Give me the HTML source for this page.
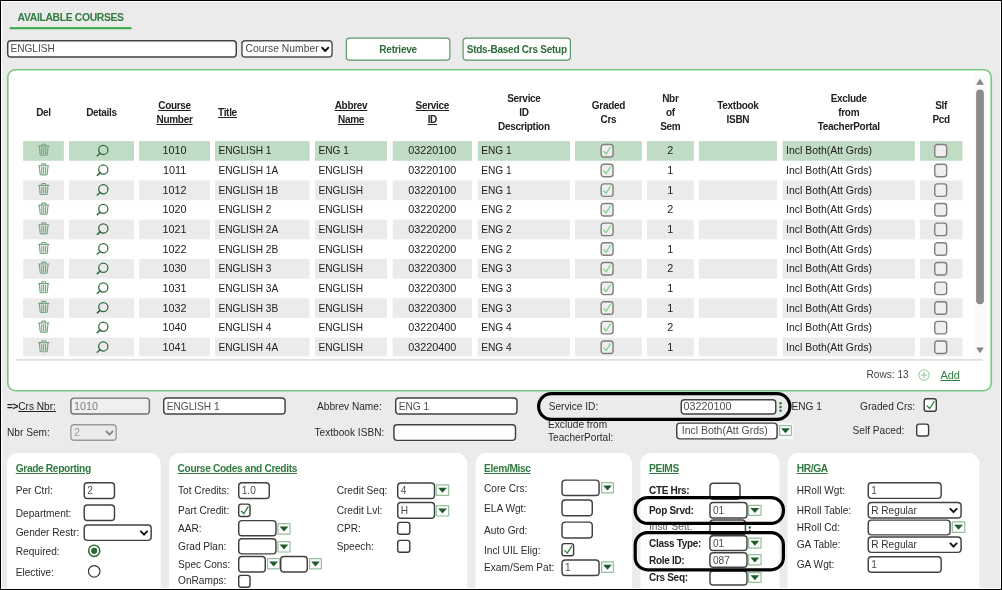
<!DOCTYPE html><html><head><meta charset="utf-8"><title>Available Courses</title><style>
*{box-sizing:border-box;margin:0;padding:0}
html,body{width:1002px;height:590px;overflow:hidden}
body{background:#ebebeb;font-family:"Liberation Sans",sans-serif;font-size:10.15px;color:#2b2b2b;position:relative}
.a{position:absolute}
.t{position:absolute;white-space:nowrap;line-height:14px;height:14px}
.b{font-weight:bold;font-size:10px;letter-spacing:-0.3px;color:#222}
.g{color:#2f7a3e}
.u{text-decoration:underline}
.c{text-align:center}
.i{color:#4d4d4d}
.r{color:#202020}
.n{color:#202020;font-size:10.8px}
.h{font-weight:bold;font-size:10.2px;letter-spacing:-0.35px;color:#2f7a3e;text-decoration:underline}
.btn{font-weight:bold;font-size:10px;letter-spacing:-0.25px;color:#2c6b38;text-align:center}
.ly{position:absolute;left:0;top:0;width:1002px;height:590px}
div.ly{will-change:transform}
</style></head><body>
<svg class="ly" width="1002" height="590" viewBox="0 0 1002 590"><rect x="9.6" y="27.2" width="121.9" height="2" fill="#35a845"/>
<rect x="7.72" y="40.83" width="228.55" height="16.25" rx="3.27" fill="#fff" stroke="#404040" stroke-width="1.45"/>
<rect x="241.92" y="40.83" width="90.15" height="16.25" rx="3.27" fill="#fff" stroke="#4f4f4f" stroke-width="1.45"/>
<path d="M322.1 47.7 L325.2 51 L328.3 47.7" fill="none" stroke="#111" stroke-width="1.9" stroke-linecap="round" stroke-linejoin="round"/>
<rect x="346.3" y="38.1" width="103.6" height="22" rx="3.4" fill="#fff" stroke="#5a9766" stroke-width="1.2"/>
<rect x="463.1" y="38.1" width="107.3" height="22" rx="3.4" fill="#fff" stroke="#5a9766" stroke-width="1.2"/>
<rect x="7.75" y="69.75" width="983.5" height="321" rx="7.65" fill="#fff" stroke="#7ac982" stroke-width="1.7"/>
<rect x="23.1" y="141.1" width="40.8" height="19.65" fill="#c0dcc4"/>
<rect x="69" y="141.1" width="65" height="19.65" fill="#c0dcc4"/>
<rect x="139.1" y="141.1" width="70.9" height="19.65" fill="#c0dcc4"/>
<rect x="215" y="141.1" width="94.6" height="19.65" fill="#c0dcc4"/>
<rect x="315" y="141.1" width="72" height="19.65" fill="#c0dcc4"/>
<rect x="392.7" y="141.1" width="79.3" height="19.65" fill="#c0dcc4"/>
<rect x="477.8" y="141.1" width="92.2" height="19.65" fill="#c0dcc4"/>
<rect x="575" y="141.1" width="66.9" height="19.65" fill="#c0dcc4"/>
<rect x="646.9" y="141.1" width="46.9" height="19.65" fill="#c0dcc4"/>
<rect x="698.9" y="141.1" width="78.1" height="19.65" fill="#c0dcc4"/>
<rect x="782.6" y="141.1" width="132.3" height="19.65" fill="#c0dcc4"/>
<rect x="919.9" y="141.1" width="42.6" height="19.65" fill="#c0dcc4"/>
<g transform="translate(38.2 143.62)"><path d="M0.4 2.5 H10.6 M3.5 2.3 V1.2 Q3.5 0.6 4.1 0.6 H6.9 Q7.5 0.6 7.5 1.2 V2.3 M1.2 2.7 L1.9 10.7 Q2 11.6 2.9 11.6 H8.1 Q9 11.6 9.1 10.7 L9.8 2.7 M3.6 4.1 V10.1 M5.5 4.1 V10.1 M7.4 4.1 V10.1" fill="none" stroke="#76a583" stroke-width="1.15" stroke-linecap="round"/></g>
<g transform="translate(95.2 144.02)"><circle cx="8.1" cy="5.9" r="4.6" fill="none" stroke="#2f6b3c" stroke-width="1.25"/><path d="M4.9 9.2 L2.1 11.7" stroke="#2f6b3c" stroke-width="1.5" stroke-linecap="round"/></g>
<g transform="translate(600.4 143.82)"><rect x="0.75" y="0.75" width="11.9" height="12.5" rx="2.6" fill="#efefef" stroke="#7f7f7f" stroke-width="1.4"/><path d="M3.4 7.6 L5.7 10.2 L10 3.4" fill="none" stroke="#86d392" stroke-width="1.35" stroke-linecap="round" stroke-linejoin="round"/></g>
<g transform="translate(934 143.82)"><rect x="0.75" y="0.75" width="11.9" height="12.5" rx="2.6" fill="#efefef" stroke="#7f7f7f" stroke-width="1.4"/></g>
<g transform="translate(38.2 163.27)"><path d="M0.4 2.5 H10.6 M3.5 2.3 V1.2 Q3.5 0.6 4.1 0.6 H6.9 Q7.5 0.6 7.5 1.2 V2.3 M1.2 2.7 L1.9 10.7 Q2 11.6 2.9 11.6 H8.1 Q9 11.6 9.1 10.7 L9.8 2.7 M3.6 4.1 V10.1 M5.5 4.1 V10.1 M7.4 4.1 V10.1" fill="none" stroke="#76a583" stroke-width="1.15" stroke-linecap="round"/></g>
<g transform="translate(95.2 163.67)"><circle cx="8.1" cy="5.9" r="4.6" fill="none" stroke="#2f6b3c" stroke-width="1.25"/><path d="M4.9 9.2 L2.1 11.7" stroke="#2f6b3c" stroke-width="1.5" stroke-linecap="round"/></g>
<g transform="translate(600.4 163.47)"><rect x="0.75" y="0.75" width="11.9" height="12.5" rx="2.6" fill="#efefef" stroke="#7f7f7f" stroke-width="1.4"/><path d="M3.4 7.6 L5.7 10.2 L10 3.4" fill="none" stroke="#86d392" stroke-width="1.35" stroke-linecap="round" stroke-linejoin="round"/></g>
<g transform="translate(934 163.47)"><rect x="0.75" y="0.75" width="11.9" height="12.5" rx="2.6" fill="#efefef" stroke="#7f7f7f" stroke-width="1.4"/></g>
<rect x="23.1" y="180.4" width="40.8" height="19.65" fill="#ebebeb"/>
<rect x="69" y="180.4" width="65" height="19.65" fill="#ebebeb"/>
<rect x="139.1" y="180.4" width="70.9" height="19.65" fill="#ebebeb"/>
<rect x="215" y="180.4" width="94.6" height="19.65" fill="#ebebeb"/>
<rect x="315" y="180.4" width="72" height="19.65" fill="#ebebeb"/>
<rect x="392.7" y="180.4" width="79.3" height="19.65" fill="#ebebeb"/>
<rect x="477.8" y="180.4" width="92.2" height="19.65" fill="#ebebeb"/>
<rect x="575" y="180.4" width="66.9" height="19.65" fill="#ebebeb"/>
<rect x="646.9" y="180.4" width="46.9" height="19.65" fill="#ebebeb"/>
<rect x="698.9" y="180.4" width="78.1" height="19.65" fill="#ebebeb"/>
<rect x="782.6" y="180.4" width="132.3" height="19.65" fill="#ebebeb"/>
<rect x="919.9" y="180.4" width="42.6" height="19.65" fill="#ebebeb"/>
<g transform="translate(38.2 182.92)"><path d="M0.4 2.5 H10.6 M3.5 2.3 V1.2 Q3.5 0.6 4.1 0.6 H6.9 Q7.5 0.6 7.5 1.2 V2.3 M1.2 2.7 L1.9 10.7 Q2 11.6 2.9 11.6 H8.1 Q9 11.6 9.1 10.7 L9.8 2.7 M3.6 4.1 V10.1 M5.5 4.1 V10.1 M7.4 4.1 V10.1" fill="none" stroke="#76a583" stroke-width="1.15" stroke-linecap="round"/></g>
<g transform="translate(95.2 183.32)"><circle cx="8.1" cy="5.9" r="4.6" fill="none" stroke="#2f6b3c" stroke-width="1.25"/><path d="M4.9 9.2 L2.1 11.7" stroke="#2f6b3c" stroke-width="1.5" stroke-linecap="round"/></g>
<g transform="translate(600.4 183.12)"><rect x="0.75" y="0.75" width="11.9" height="12.5" rx="2.6" fill="#efefef" stroke="#7f7f7f" stroke-width="1.4"/><path d="M3.4 7.6 L5.7 10.2 L10 3.4" fill="none" stroke="#86d392" stroke-width="1.35" stroke-linecap="round" stroke-linejoin="round"/></g>
<g transform="translate(934 183.12)"><rect x="0.75" y="0.75" width="11.9" height="12.5" rx="2.6" fill="#efefef" stroke="#7f7f7f" stroke-width="1.4"/></g>
<g transform="translate(38.2 202.57)"><path d="M0.4 2.5 H10.6 M3.5 2.3 V1.2 Q3.5 0.6 4.1 0.6 H6.9 Q7.5 0.6 7.5 1.2 V2.3 M1.2 2.7 L1.9 10.7 Q2 11.6 2.9 11.6 H8.1 Q9 11.6 9.1 10.7 L9.8 2.7 M3.6 4.1 V10.1 M5.5 4.1 V10.1 M7.4 4.1 V10.1" fill="none" stroke="#76a583" stroke-width="1.15" stroke-linecap="round"/></g>
<g transform="translate(95.2 202.97)"><circle cx="8.1" cy="5.9" r="4.6" fill="none" stroke="#2f6b3c" stroke-width="1.25"/><path d="M4.9 9.2 L2.1 11.7" stroke="#2f6b3c" stroke-width="1.5" stroke-linecap="round"/></g>
<g transform="translate(600.4 202.77)"><rect x="0.75" y="0.75" width="11.9" height="12.5" rx="2.6" fill="#efefef" stroke="#7f7f7f" stroke-width="1.4"/><path d="M3.4 7.6 L5.7 10.2 L10 3.4" fill="none" stroke="#86d392" stroke-width="1.35" stroke-linecap="round" stroke-linejoin="round"/></g>
<g transform="translate(934 202.77)"><rect x="0.75" y="0.75" width="11.9" height="12.5" rx="2.6" fill="#efefef" stroke="#7f7f7f" stroke-width="1.4"/></g>
<rect x="23.1" y="219.7" width="40.8" height="19.65" fill="#ebebeb"/>
<rect x="69" y="219.7" width="65" height="19.65" fill="#ebebeb"/>
<rect x="139.1" y="219.7" width="70.9" height="19.65" fill="#ebebeb"/>
<rect x="215" y="219.7" width="94.6" height="19.65" fill="#ebebeb"/>
<rect x="315" y="219.7" width="72" height="19.65" fill="#ebebeb"/>
<rect x="392.7" y="219.7" width="79.3" height="19.65" fill="#ebebeb"/>
<rect x="477.8" y="219.7" width="92.2" height="19.65" fill="#ebebeb"/>
<rect x="575" y="219.7" width="66.9" height="19.65" fill="#ebebeb"/>
<rect x="646.9" y="219.7" width="46.9" height="19.65" fill="#ebebeb"/>
<rect x="698.9" y="219.7" width="78.1" height="19.65" fill="#ebebeb"/>
<rect x="782.6" y="219.7" width="132.3" height="19.65" fill="#ebebeb"/>
<rect x="919.9" y="219.7" width="42.6" height="19.65" fill="#ebebeb"/>
<g transform="translate(38.2 222.22)"><path d="M0.4 2.5 H10.6 M3.5 2.3 V1.2 Q3.5 0.6 4.1 0.6 H6.9 Q7.5 0.6 7.5 1.2 V2.3 M1.2 2.7 L1.9 10.7 Q2 11.6 2.9 11.6 H8.1 Q9 11.6 9.1 10.7 L9.8 2.7 M3.6 4.1 V10.1 M5.5 4.1 V10.1 M7.4 4.1 V10.1" fill="none" stroke="#76a583" stroke-width="1.15" stroke-linecap="round"/></g>
<g transform="translate(95.2 222.62)"><circle cx="8.1" cy="5.9" r="4.6" fill="none" stroke="#2f6b3c" stroke-width="1.25"/><path d="M4.9 9.2 L2.1 11.7" stroke="#2f6b3c" stroke-width="1.5" stroke-linecap="round"/></g>
<g transform="translate(600.4 222.42)"><rect x="0.75" y="0.75" width="11.9" height="12.5" rx="2.6" fill="#efefef" stroke="#7f7f7f" stroke-width="1.4"/><path d="M3.4 7.6 L5.7 10.2 L10 3.4" fill="none" stroke="#86d392" stroke-width="1.35" stroke-linecap="round" stroke-linejoin="round"/></g>
<g transform="translate(934 222.42)"><rect x="0.75" y="0.75" width="11.9" height="12.5" rx="2.6" fill="#efefef" stroke="#7f7f7f" stroke-width="1.4"/></g>
<g transform="translate(38.2 241.87)"><path d="M0.4 2.5 H10.6 M3.5 2.3 V1.2 Q3.5 0.6 4.1 0.6 H6.9 Q7.5 0.6 7.5 1.2 V2.3 M1.2 2.7 L1.9 10.7 Q2 11.6 2.9 11.6 H8.1 Q9 11.6 9.1 10.7 L9.8 2.7 M3.6 4.1 V10.1 M5.5 4.1 V10.1 M7.4 4.1 V10.1" fill="none" stroke="#76a583" stroke-width="1.15" stroke-linecap="round"/></g>
<g transform="translate(95.2 242.27)"><circle cx="8.1" cy="5.9" r="4.6" fill="none" stroke="#2f6b3c" stroke-width="1.25"/><path d="M4.9 9.2 L2.1 11.7" stroke="#2f6b3c" stroke-width="1.5" stroke-linecap="round"/></g>
<g transform="translate(600.4 242.07)"><rect x="0.75" y="0.75" width="11.9" height="12.5" rx="2.6" fill="#efefef" stroke="#7f7f7f" stroke-width="1.4"/><path d="M3.4 7.6 L5.7 10.2 L10 3.4" fill="none" stroke="#86d392" stroke-width="1.35" stroke-linecap="round" stroke-linejoin="round"/></g>
<g transform="translate(934 242.07)"><rect x="0.75" y="0.75" width="11.9" height="12.5" rx="2.6" fill="#efefef" stroke="#7f7f7f" stroke-width="1.4"/></g>
<rect x="23.1" y="259" width="40.8" height="19.65" fill="#ebebeb"/>
<rect x="69" y="259" width="65" height="19.65" fill="#ebebeb"/>
<rect x="139.1" y="259" width="70.9" height="19.65" fill="#ebebeb"/>
<rect x="215" y="259" width="94.6" height="19.65" fill="#ebebeb"/>
<rect x="315" y="259" width="72" height="19.65" fill="#ebebeb"/>
<rect x="392.7" y="259" width="79.3" height="19.65" fill="#ebebeb"/>
<rect x="477.8" y="259" width="92.2" height="19.65" fill="#ebebeb"/>
<rect x="575" y="259" width="66.9" height="19.65" fill="#ebebeb"/>
<rect x="646.9" y="259" width="46.9" height="19.65" fill="#ebebeb"/>
<rect x="698.9" y="259" width="78.1" height="19.65" fill="#ebebeb"/>
<rect x="782.6" y="259" width="132.3" height="19.65" fill="#ebebeb"/>
<rect x="919.9" y="259" width="42.6" height="19.65" fill="#ebebeb"/>
<g transform="translate(38.2 261.52)"><path d="M0.4 2.5 H10.6 M3.5 2.3 V1.2 Q3.5 0.6 4.1 0.6 H6.9 Q7.5 0.6 7.5 1.2 V2.3 M1.2 2.7 L1.9 10.7 Q2 11.6 2.9 11.6 H8.1 Q9 11.6 9.1 10.7 L9.8 2.7 M3.6 4.1 V10.1 M5.5 4.1 V10.1 M7.4 4.1 V10.1" fill="none" stroke="#76a583" stroke-width="1.15" stroke-linecap="round"/></g>
<g transform="translate(95.2 261.93)"><circle cx="8.1" cy="5.9" r="4.6" fill="none" stroke="#2f6b3c" stroke-width="1.25"/><path d="M4.9 9.2 L2.1 11.7" stroke="#2f6b3c" stroke-width="1.5" stroke-linecap="round"/></g>
<g transform="translate(600.4 261.72)"><rect x="0.75" y="0.75" width="11.9" height="12.5" rx="2.6" fill="#efefef" stroke="#7f7f7f" stroke-width="1.4"/><path d="M3.4 7.6 L5.7 10.2 L10 3.4" fill="none" stroke="#86d392" stroke-width="1.35" stroke-linecap="round" stroke-linejoin="round"/></g>
<g transform="translate(934 261.72)"><rect x="0.75" y="0.75" width="11.9" height="12.5" rx="2.6" fill="#efefef" stroke="#7f7f7f" stroke-width="1.4"/></g>
<g transform="translate(38.2 281.17)"><path d="M0.4 2.5 H10.6 M3.5 2.3 V1.2 Q3.5 0.6 4.1 0.6 H6.9 Q7.5 0.6 7.5 1.2 V2.3 M1.2 2.7 L1.9 10.7 Q2 11.6 2.9 11.6 H8.1 Q9 11.6 9.1 10.7 L9.8 2.7 M3.6 4.1 V10.1 M5.5 4.1 V10.1 M7.4 4.1 V10.1" fill="none" stroke="#76a583" stroke-width="1.15" stroke-linecap="round"/></g>
<g transform="translate(95.2 281.57)"><circle cx="8.1" cy="5.9" r="4.6" fill="none" stroke="#2f6b3c" stroke-width="1.25"/><path d="M4.9 9.2 L2.1 11.7" stroke="#2f6b3c" stroke-width="1.5" stroke-linecap="round"/></g>
<g transform="translate(600.4 281.37)"><rect x="0.75" y="0.75" width="11.9" height="12.5" rx="2.6" fill="#efefef" stroke="#7f7f7f" stroke-width="1.4"/><path d="M3.4 7.6 L5.7 10.2 L10 3.4" fill="none" stroke="#86d392" stroke-width="1.35" stroke-linecap="round" stroke-linejoin="round"/></g>
<g transform="translate(934 281.37)"><rect x="0.75" y="0.75" width="11.9" height="12.5" rx="2.6" fill="#efefef" stroke="#7f7f7f" stroke-width="1.4"/></g>
<rect x="23.1" y="298.3" width="40.8" height="19.65" fill="#ebebeb"/>
<rect x="69" y="298.3" width="65" height="19.65" fill="#ebebeb"/>
<rect x="139.1" y="298.3" width="70.9" height="19.65" fill="#ebebeb"/>
<rect x="215" y="298.3" width="94.6" height="19.65" fill="#ebebeb"/>
<rect x="315" y="298.3" width="72" height="19.65" fill="#ebebeb"/>
<rect x="392.7" y="298.3" width="79.3" height="19.65" fill="#ebebeb"/>
<rect x="477.8" y="298.3" width="92.2" height="19.65" fill="#ebebeb"/>
<rect x="575" y="298.3" width="66.9" height="19.65" fill="#ebebeb"/>
<rect x="646.9" y="298.3" width="46.9" height="19.65" fill="#ebebeb"/>
<rect x="698.9" y="298.3" width="78.1" height="19.65" fill="#ebebeb"/>
<rect x="782.6" y="298.3" width="132.3" height="19.65" fill="#ebebeb"/>
<rect x="919.9" y="298.3" width="42.6" height="19.65" fill="#ebebeb"/>
<g transform="translate(38.2 300.82)"><path d="M0.4 2.5 H10.6 M3.5 2.3 V1.2 Q3.5 0.6 4.1 0.6 H6.9 Q7.5 0.6 7.5 1.2 V2.3 M1.2 2.7 L1.9 10.7 Q2 11.6 2.9 11.6 H8.1 Q9 11.6 9.1 10.7 L9.8 2.7 M3.6 4.1 V10.1 M5.5 4.1 V10.1 M7.4 4.1 V10.1" fill="none" stroke="#76a583" stroke-width="1.15" stroke-linecap="round"/></g>
<g transform="translate(95.2 301.22)"><circle cx="8.1" cy="5.9" r="4.6" fill="none" stroke="#2f6b3c" stroke-width="1.25"/><path d="M4.9 9.2 L2.1 11.7" stroke="#2f6b3c" stroke-width="1.5" stroke-linecap="round"/></g>
<g transform="translate(600.4 301.02)"><rect x="0.75" y="0.75" width="11.9" height="12.5" rx="2.6" fill="#efefef" stroke="#7f7f7f" stroke-width="1.4"/><path d="M3.4 7.6 L5.7 10.2 L10 3.4" fill="none" stroke="#86d392" stroke-width="1.35" stroke-linecap="round" stroke-linejoin="round"/></g>
<g transform="translate(934 301.02)"><rect x="0.75" y="0.75" width="11.9" height="12.5" rx="2.6" fill="#efefef" stroke="#7f7f7f" stroke-width="1.4"/></g>
<g transform="translate(38.2 320.47)"><path d="M0.4 2.5 H10.6 M3.5 2.3 V1.2 Q3.5 0.6 4.1 0.6 H6.9 Q7.5 0.6 7.5 1.2 V2.3 M1.2 2.7 L1.9 10.7 Q2 11.6 2.9 11.6 H8.1 Q9 11.6 9.1 10.7 L9.8 2.7 M3.6 4.1 V10.1 M5.5 4.1 V10.1 M7.4 4.1 V10.1" fill="none" stroke="#76a583" stroke-width="1.15" stroke-linecap="round"/></g>
<g transform="translate(95.2 320.88)"><circle cx="8.1" cy="5.9" r="4.6" fill="none" stroke="#2f6b3c" stroke-width="1.25"/><path d="M4.9 9.2 L2.1 11.7" stroke="#2f6b3c" stroke-width="1.5" stroke-linecap="round"/></g>
<g transform="translate(600.4 320.67)"><rect x="0.75" y="0.75" width="11.9" height="12.5" rx="2.6" fill="#efefef" stroke="#7f7f7f" stroke-width="1.4"/><path d="M3.4 7.6 L5.7 10.2 L10 3.4" fill="none" stroke="#86d392" stroke-width="1.35" stroke-linecap="round" stroke-linejoin="round"/></g>
<g transform="translate(934 320.67)"><rect x="0.75" y="0.75" width="11.9" height="12.5" rx="2.6" fill="#efefef" stroke="#7f7f7f" stroke-width="1.4"/></g>
<rect x="23.1" y="337.6" width="40.8" height="18.5" fill="#ebebeb"/>
<rect x="69" y="337.6" width="65" height="18.5" fill="#ebebeb"/>
<rect x="139.1" y="337.6" width="70.9" height="18.5" fill="#ebebeb"/>
<rect x="215" y="337.6" width="94.6" height="18.5" fill="#ebebeb"/>
<rect x="315" y="337.6" width="72" height="18.5" fill="#ebebeb"/>
<rect x="392.7" y="337.6" width="79.3" height="18.5" fill="#ebebeb"/>
<rect x="477.8" y="337.6" width="92.2" height="18.5" fill="#ebebeb"/>
<rect x="575" y="337.6" width="66.9" height="18.5" fill="#ebebeb"/>
<rect x="646.9" y="337.6" width="46.9" height="18.5" fill="#ebebeb"/>
<rect x="698.9" y="337.6" width="78.1" height="18.5" fill="#ebebeb"/>
<rect x="782.6" y="337.6" width="132.3" height="18.5" fill="#ebebeb"/>
<rect x="919.9" y="337.6" width="42.6" height="18.5" fill="#ebebeb"/>
<g transform="translate(38.2 340.12)"><path d="M0.4 2.5 H10.6 M3.5 2.3 V1.2 Q3.5 0.6 4.1 0.6 H6.9 Q7.5 0.6 7.5 1.2 V2.3 M1.2 2.7 L1.9 10.7 Q2 11.6 2.9 11.6 H8.1 Q9 11.6 9.1 10.7 L9.8 2.7 M3.6 4.1 V10.1 M5.5 4.1 V10.1 M7.4 4.1 V10.1" fill="none" stroke="#76a583" stroke-width="1.15" stroke-linecap="round"/></g>
<g transform="translate(95.2 340.53)"><circle cx="8.1" cy="5.9" r="4.6" fill="none" stroke="#2f6b3c" stroke-width="1.25"/><path d="M4.9 9.2 L2.1 11.7" stroke="#2f6b3c" stroke-width="1.5" stroke-linecap="round"/></g>
<g transform="translate(600.4 340.32)"><rect x="0.75" y="0.75" width="11.9" height="12.5" rx="2.6" fill="#efefef" stroke="#7f7f7f" stroke-width="1.4"/><path d="M3.4 7.6 L5.7 10.2 L10 3.4" fill="none" stroke="#86d392" stroke-width="1.35" stroke-linecap="round" stroke-linejoin="round"/></g>
<g transform="translate(934 340.32)"><rect x="0.75" y="0.75" width="11.9" height="12.5" rx="2.6" fill="#efefef" stroke="#7f7f7f" stroke-width="1.4"/></g>
<rect x="974.2" y="74.4" width="11.6" height="281.6" fill="#fafafa"/>
<path d="M976 84.7 L980 78.8 L984 84.7 Z" fill="#858585"/>
<rect x="976.1" y="89.6" width="7.8" height="214.6" rx="3.9" fill="#8b8b8b"/>
<path d="M976.2 347.4 L980 353.2 L983.8 347.4 Z" fill="#858585"/>
<rect x="15.5" y="359" width="967.3" height="1.7" fill="#dae1e4"/>
<circle cx="924" cy="375" r="5.2" fill="none" stroke="#86c191" stroke-width="0.9"/><path d="M920.8 375 H927.2 M924 371.8 V378.2" stroke="#86c191" stroke-width="0.9"/>
<rect x="70.92" y="398.12" width="78.45" height="15.95" rx="3.27" fill="#eeefef" stroke="#707070" stroke-width="1.45"/>
<rect x="163.72" y="398.03" width="121.35" height="16.05" rx="3.27" fill="#fff" stroke="#404040" stroke-width="1.45"/>
<rect x="395.73" y="398.03" width="121.25" height="16.05" rx="3.27" fill="#fff" stroke="#404040" stroke-width="1.45"/>
<rect x="924.2" y="398.7" width="12.1" height="12.6" rx="2.3" fill="#fff" stroke="#3a3a3a" stroke-width="1.4"/>
<path d="M927.14 405.98 L929.71 408.5 L934.16 401.5" fill="none" stroke="#2e7d3c" stroke-width="1.3" stroke-linecap="round" stroke-linejoin="round"/>
<rect x="70.85" y="424.75" width="45.4" height="15.5" rx="3.35" fill="#ebebeb" stroke="#999" stroke-width="1.3"/>
<path d="M106.4 431.4 L109.5 434.7 L112.6 431.4" fill="none" stroke="#888" stroke-width="1.9" stroke-linecap="round" stroke-linejoin="round"/>
<rect x="393.93" y="424.73" width="121.55" height="15.65" rx="3.27" fill="#fff" stroke="#404040" stroke-width="1.45"/>
<rect x="778.6" y="422.5" width="14.6" height="16.5" fill="#f8f8f8"/>
<rect x="676.73" y="423.12" width="100.35" height="15.75" rx="3.27" fill="#fff" stroke="#404040" stroke-width="1.45"/>
<rect x="779.6" y="425.6" width="11.8" height="9.8" rx="0.4" fill="#fff" stroke="#93bf9d" stroke-width="1.2"/>
<path d="M781.1 428.2 L789.9 428.2 L785.5 433.2 Z" fill="#1f5c2b"/>
<rect x="916.7" y="424.1" width="11.9" height="11.9" rx="2.3" fill="#fff" stroke="#3a3a3a" stroke-width="1.4"/>
<rect x="7" y="453" width="153.6" height="147" rx="11" fill="#fff"/>
<rect x="169" y="453" width="298.2" height="147" rx="11" fill="#fff"/>
<rect x="475.5" y="453" width="156.5" height="147" rx="11" fill="#fff"/>
<rect x="640.5" y="453" width="139" height="147" rx="11" fill="#fff"/>
<rect x="787.5" y="453" width="191.8" height="147" rx="11" fill="#fff"/>
<rect x="84.22" y="482.83" width="30.25" height="15.65" rx="3.27" fill="#fff" stroke="#404040" stroke-width="1.45"/>
<rect x="84.22" y="505.03" width="30.25" height="15.55" rx="3.27" fill="#fff" stroke="#404040" stroke-width="1.45"/>
<rect x="84.22" y="524.93" width="66.95" height="15.45" rx="3.27" fill="#fff" stroke="#404040" stroke-width="1.45"/>
<path d="M140.9 531.4 L144 534.7 L147.1 531.4" fill="none" stroke="#111" stroke-width="1.9" stroke-linecap="round" stroke-linejoin="round"/>
<circle cx="94.2" cy="550.8" r="5.6" fill="#fff" stroke="#2c6b38" stroke-width="1.5"/><circle cx="94.2" cy="550.8" r="3.1" fill="#2c6b38"/>
<circle cx="94.2" cy="571.3" r="5.75" fill="#fff" stroke="#3a3a3a" stroke-width="1.2"/>
<rect x="238.72" y="482.83" width="30.55" height="15.65" rx="3.27" fill="#fff" stroke="#404040" stroke-width="1.45"/>
<rect x="238.7" y="504.1" width="11.3" height="12.4" rx="2.3" fill="#fff" stroke="#3a3a3a" stroke-width="1.4"/>
<path d="M241.43 511.27 L243.84 513.75 L248.03 506.85" fill="none" stroke="#2e7d3c" stroke-width="1.3" stroke-linecap="round" stroke-linejoin="round"/>
<rect x="238.72" y="520.62" width="37.25" height="15.05" rx="3.27" fill="#fff" stroke="#404040" stroke-width="1.45"/>
<rect x="277.9" y="523.6" width="12.1" height="10.5" rx="0.4" fill="#fff" stroke="#93bf9d" stroke-width="1.2"/>
<path d="M279.55 526.55 L288.35 526.55 L283.95 531.55 Z" fill="#1f5c2b"/>
<rect x="238.72" y="538.73" width="37.25" height="15.15" rx="3.27" fill="#fff" stroke="#404040" stroke-width="1.45"/>
<rect x="277.9" y="541.6" width="12.1" height="10.4" rx="0.4" fill="#fff" stroke="#93bf9d" stroke-width="1.2"/>
<path d="M279.55 544.5 L288.35 544.5 L283.95 549.5 Z" fill="#1f5c2b"/>
<rect x="238.72" y="556.52" width="26.55" height="15.55" rx="3.27" fill="#fff" stroke="#404040" stroke-width="1.45"/>
<rect x="267.6" y="558.6" width="12" height="10.3" rx="0.4" fill="#fff" stroke="#93bf9d" stroke-width="1.2"/>
<path d="M269.2 561.45 L278 561.45 L273.6 566.45 Z" fill="#1f5c2b"/>
<rect x="280.73" y="556.52" width="26.55" height="15.55" rx="3.27" fill="#fff" stroke="#404040" stroke-width="1.45"/>
<rect x="309.6" y="558.6" width="11.8" height="10.3" rx="0.4" fill="#fff" stroke="#93bf9d" stroke-width="1.2"/>
<path d="M311.1 561.45 L319.9 561.45 L315.5 566.45 Z" fill="#1f5c2b"/>
<rect x="238.7" y="575.4" width="11.3" height="11.9" rx="2.3" fill="#fff" stroke="#3a3a3a" stroke-width="1.4"/>
<rect x="397.73" y="482.93" width="36.75" height="15.55" rx="3.27" fill="#fff" stroke="#404040" stroke-width="1.45"/>
<rect x="436.3" y="484.9" width="12.4" height="10.4" rx="0.4" fill="#fff" stroke="#93bf9d" stroke-width="1.2"/>
<path d="M438.1 487.8 L446.9 487.8 L442.5 492.8 Z" fill="#1f5c2b"/>
<rect x="397.73" y="502.53" width="36.75" height="15.65" rx="3.27" fill="#fff" stroke="#404040" stroke-width="1.45"/>
<rect x="436.3" y="505.6" width="12.4" height="10.4" rx="0.4" fill="#fff" stroke="#93bf9d" stroke-width="1.2"/>
<path d="M438.1 508.5 L446.9 508.5 L442.5 513.5 Z" fill="#1f5c2b"/>
<rect x="397.7" y="522.4" width="12.1" height="11.9" rx="2.3" fill="#fff" stroke="#3a3a3a" stroke-width="1.4"/>
<rect x="397.7" y="540.4" width="12.1" height="11.9" rx="2.3" fill="#fff" stroke="#3a3a3a" stroke-width="1.4"/>
<rect x="562.02" y="480.12" width="37.05" height="15.45" rx="3.27" fill="#fff" stroke="#404040" stroke-width="1.45"/>
<rect x="601.6" y="482.7" width="11.8" height="10.2" rx="0.4" fill="#fff" stroke="#93bf9d" stroke-width="1.2"/>
<path d="M603.1 485.5 L611.9 485.5 L607.5 490.5 Z" fill="#1f5c2b"/>
<rect x="562.02" y="500.03" width="30.25" height="15.75" rx="3.27" fill="#fff" stroke="#404040" stroke-width="1.45"/>
<rect x="562.02" y="522.12" width="30.25" height="15.85" rx="3.27" fill="#fff" stroke="#404040" stroke-width="1.45"/>
<rect x="562" y="543.6" width="11.6" height="12.2" rx="2.3" fill="#fff" stroke="#3a3a3a" stroke-width="1.4"/>
<path d="M564.81 550.65 L567.28 553.1 L571.57 546.3" fill="none" stroke="#2e7d3c" stroke-width="1.3" stroke-linecap="round" stroke-linejoin="round"/>
<rect x="562.02" y="559.93" width="37.05" height="15.65" rx="3.27" fill="#fff" stroke="#404040" stroke-width="1.45"/>
<rect x="601.6" y="561.9" width="11.8" height="10.5" rx="0.4" fill="#fff" stroke="#93bf9d" stroke-width="1.2"/>
<path d="M603.1 564.85 L611.9 564.85 L607.5 569.85 Z" fill="#1f5c2b"/>
<rect x="710.02" y="483.23" width="29.95" height="16.05" rx="3.27" fill="#fff" stroke="#404040" stroke-width="1.45"/>
<rect x="710.02" y="520.02" width="35.45" height="14.75" rx="3.27" fill="#fff" stroke="#404040" stroke-width="1.45"/>
<circle cx="749.8" cy="523.75" r="1.25" fill="#2a7337"/>
<circle cx="749.8" cy="527.5" r="1.25" fill="#2a7337"/>
<circle cx="749.8" cy="531.25" r="1.25" fill="#2a7337"/>
<rect x="709.93" y="571.02" width="37.05" height="14.05" rx="3.27" fill="#fff" stroke="#404040" stroke-width="1.45"/>
<rect x="748.6" y="572.6" width="12.5" height="9.8" rx="0.4" fill="#fff" stroke="#93bf9d" stroke-width="1.2"/>
<path d="M750.45 575.2 L759.25 575.2 L754.85 580.2 Z" fill="#1f5c2b"/>
<rect x="868.23" y="482.83" width="72.95" height="15.55" rx="3.27" fill="#fff" stroke="#404040" stroke-width="1.45"/>
<rect x="868.23" y="502.43" width="92.85" height="15.55" rx="3.27" fill="#fff" stroke="#404040" stroke-width="1.45"/>
<path d="M950.4 508.9 L953.5 512.2 L956.6 508.9" fill="none" stroke="#111" stroke-width="1.9" stroke-linecap="round" stroke-linejoin="round"/>
<rect x="868.23" y="520.12" width="81.85" height="14.75" rx="3.27" fill="#fff" stroke="#404040" stroke-width="1.45"/>
<rect x="952.3" y="521.9" width="12.5" height="10.4" rx="0.4" fill="#fff" stroke="#93bf9d" stroke-width="1.2"/>
<path d="M954.15 524.8 L962.95 524.8 L958.55 529.8 Z" fill="#1f5c2b"/>
<rect x="868.23" y="537.02" width="92.85" height="15.35" rx="3.27" fill="#fff" stroke="#404040" stroke-width="1.45"/>
<path d="M950.4 543.4 L953.5 546.7 L956.6 543.4" fill="none" stroke="#111" stroke-width="1.9" stroke-linecap="round" stroke-linejoin="round"/>
<rect x="868.23" y="556.73" width="72.95" height="15.45" rx="3.27" fill="#fff" stroke="#404040" stroke-width="1.45"/></svg>
<div class="ly"><div class="t g" style="left:17.6px;top:11px;font-weight:bold;font-size:10.4px;letter-spacing:-0.36px;">AVAILABLE COURSES</div>
<div class="t i" style="left:10.4px;top:42px;">ENGLISH</div>
<div class="t i" style="left:245.6px;top:42px;color:#4a4a4a;font-size:10.35px;">Course Number</div>
<div class="t btn" style="left:345.7px;top:43px;width:104.8px;">Retrieve</div>
<div class="t btn" style="left:462.5px;top:43px;width:108.5px;">Stds-Based Crs Setup</div>
<div class="t b c" style="left:-16.5px;top:106px;width:120px;">Del</div>
<div class="t b c" style="left:41.5px;top:106px;width:120px;">Details</div>
<div class="t b u c" style="left:114.55px;top:99px;width:120px;">Course</div>
<div class="t b u c" style="left:114.55px;top:113px;width:120px;">Number</div>
<div class="t b u" style="left:218px;top:106px;">Title</div>
<div class="t b u c" style="left:291px;top:99px;width:120px;">Abbrev</div>
<div class="t b u c" style="left:291px;top:113px;width:120px;">Name</div>
<div class="t b u c" style="left:372.35px;top:99px;width:120px;">Service</div>
<div class="t b u c" style="left:372.35px;top:113px;width:120px;">ID</div>
<div class="t b c" style="left:463.9px;top:92px;width:120px;">Service</div>
<div class="t b c" style="left:463.9px;top:106px;width:120px;">ID</div>
<div class="t b c" style="left:463.9px;top:120px;width:120px;">Description</div>
<div class="t b c" style="left:548.45px;top:99px;width:120px;">Graded</div>
<div class="t b c" style="left:548.45px;top:113px;width:120px;">Crs</div>
<div class="t b c" style="left:610.35px;top:92px;width:120px;">Nbr</div>
<div class="t b c" style="left:610.35px;top:106px;width:120px;">of</div>
<div class="t b c" style="left:610.35px;top:120px;width:120px;">Sem</div>
<div class="t b c" style="left:677.95px;top:99px;width:120px;">Textbook</div>
<div class="t b c" style="left:677.95px;top:113px;width:120px;">ISBN</div>
<div class="t b c" style="left:788.75px;top:92px;width:120px;">Exclude</div>
<div class="t b c" style="left:788.75px;top:106px;width:120px;">from</div>
<div class="t b c" style="left:788.75px;top:120px;width:120px;">TeacherPortal</div>
<div class="t b c" style="left:881.2px;top:99px;width:120px;">Slf</div>
<div class="t b c" style="left:881.2px;top:113px;width:120px;">Pcd</div>
<div class="t n c" style="left:144.55px;top:143px;width:60px;">1010</div>
<div class="t r" style="left:218.5px;top:144px;">ENGLISH 1</div>
<div class="t r" style="left:318.5px;top:144px;">ENG 1</div>
<div class="t n c" style="left:397.35px;top:143px;width:70px;">03220100</div>
<div class="t r" style="left:481.3px;top:144px;">ENG 1</div>
<div class="t n c" style="left:655.35px;top:143px;width:30px;">2</div>
<div class="t r" style="left:786.1px;top:144px;font-size:10.45px;">Incl Both(Att Grds)</div>
<div class="t n c" style="left:144.55px;top:163px;width:60px;">1011</div>
<div class="t r" style="left:218.5px;top:164px;">ENGLISH 1A</div>
<div class="t r" style="left:318.5px;top:164px;">ENGLISH</div>
<div class="t n c" style="left:397.35px;top:163px;width:70px;">03220100</div>
<div class="t r" style="left:481.3px;top:164px;">ENG 1</div>
<div class="t n c" style="left:655.35px;top:163px;width:30px;">1</div>
<div class="t r" style="left:786.1px;top:164px;font-size:10.45px;">Incl Both(Att Grds)</div>
<div class="t n c" style="left:144.55px;top:183px;width:60px;">1012</div>
<div class="t r" style="left:218.5px;top:184px;">ENGLISH 1B</div>
<div class="t r" style="left:318.5px;top:184px;">ENGLISH</div>
<div class="t n c" style="left:397.35px;top:183px;width:70px;">03220100</div>
<div class="t r" style="left:481.3px;top:184px;">ENG 1</div>
<div class="t n c" style="left:655.35px;top:183px;width:30px;">1</div>
<div class="t r" style="left:786.1px;top:184px;font-size:10.45px;">Incl Both(Att Grds)</div>
<div class="t n c" style="left:144.55px;top:202px;width:60px;">1020</div>
<div class="t r" style="left:218.5px;top:203px;">ENGLISH 2</div>
<div class="t r" style="left:318.5px;top:203px;">ENGLISH</div>
<div class="t n c" style="left:397.35px;top:202px;width:70px;">03220200</div>
<div class="t r" style="left:481.3px;top:203px;">ENG 2</div>
<div class="t n c" style="left:655.35px;top:202px;width:30px;">2</div>
<div class="t r" style="left:786.1px;top:203px;font-size:10.45px;">Incl Both(Att Grds)</div>
<div class="t n c" style="left:144.55px;top:222px;width:60px;">1021</div>
<div class="t r" style="left:218.5px;top:223px;">ENGLISH 2A</div>
<div class="t r" style="left:318.5px;top:223px;">ENGLISH</div>
<div class="t n c" style="left:397.35px;top:222px;width:70px;">03220200</div>
<div class="t r" style="left:481.3px;top:223px;">ENG 2</div>
<div class="t n c" style="left:655.35px;top:222px;width:30px;">1</div>
<div class="t r" style="left:786.1px;top:223px;font-size:10.45px;">Incl Both(Att Grds)</div>
<div class="t n c" style="left:144.55px;top:242px;width:60px;">1022</div>
<div class="t r" style="left:218.5px;top:243px;">ENGLISH 2B</div>
<div class="t r" style="left:318.5px;top:243px;">ENGLISH</div>
<div class="t n c" style="left:397.35px;top:242px;width:70px;">03220200</div>
<div class="t r" style="left:481.3px;top:243px;">ENG 2</div>
<div class="t n c" style="left:655.35px;top:242px;width:30px;">1</div>
<div class="t r" style="left:786.1px;top:243px;font-size:10.45px;">Incl Both(Att Grds)</div>
<div class="t n c" style="left:144.55px;top:261px;width:60px;">1030</div>
<div class="t r" style="left:218.5px;top:262px;">ENGLISH 3</div>
<div class="t r" style="left:318.5px;top:262px;">ENGLISH</div>
<div class="t n c" style="left:397.35px;top:261px;width:70px;">03220300</div>
<div class="t r" style="left:481.3px;top:262px;">ENG 3</div>
<div class="t n c" style="left:655.35px;top:261px;width:30px;">2</div>
<div class="t r" style="left:786.1px;top:262px;font-size:10.45px;">Incl Both(Att Grds)</div>
<div class="t n c" style="left:144.55px;top:281px;width:60px;">1031</div>
<div class="t r" style="left:218.5px;top:282px;">ENGLISH 3A</div>
<div class="t r" style="left:318.5px;top:282px;">ENGLISH</div>
<div class="t n c" style="left:397.35px;top:281px;width:70px;">03220300</div>
<div class="t r" style="left:481.3px;top:282px;">ENG 3</div>
<div class="t n c" style="left:655.35px;top:281px;width:30px;">1</div>
<div class="t r" style="left:786.1px;top:282px;font-size:10.45px;">Incl Both(Att Grds)</div>
<div class="t n c" style="left:144.55px;top:301px;width:60px;">1032</div>
<div class="t r" style="left:218.5px;top:302px;">ENGLISH 3B</div>
<div class="t r" style="left:318.5px;top:302px;">ENGLISH</div>
<div class="t n c" style="left:397.35px;top:301px;width:70px;">03220300</div>
<div class="t r" style="left:481.3px;top:302px;">ENG 3</div>
<div class="t n c" style="left:655.35px;top:301px;width:30px;">1</div>
<div class="t r" style="left:786.1px;top:302px;font-size:10.45px;">Incl Both(Att Grds)</div>
<div class="t n c" style="left:144.55px;top:320px;width:60px;">1040</div>
<div class="t r" style="left:218.5px;top:321px;">ENGLISH 4</div>
<div class="t r" style="left:318.5px;top:321px;">ENGLISH</div>
<div class="t n c" style="left:397.35px;top:320px;width:70px;">03220400</div>
<div class="t r" style="left:481.3px;top:321px;">ENG 4</div>
<div class="t n c" style="left:655.35px;top:320px;width:30px;">2</div>
<div class="t r" style="left:786.1px;top:321px;font-size:10.45px;">Incl Both(Att Grds)</div>
<div class="t n c" style="left:144.55px;top:340px;width:60px;">1041</div>
<div class="t r" style="left:218.5px;top:341px;">ENGLISH 4A</div>
<div class="t r" style="left:318.5px;top:341px;">ENGLISH</div>
<div class="t n c" style="left:397.35px;top:340px;width:70px;">03220400</div>
<div class="t r" style="left:481.3px;top:341px;">ENG 4</div>
<div class="t n c" style="left:655.35px;top:340px;width:30px;">1</div>
<div class="t r" style="left:786.1px;top:341px;font-size:10.45px;">Incl Both(Att Grds)</div>
<div class="t " style="left:866.5px;top:368px;color:#444;">Rows: 13</div>
<div class="t g u" style="left:940.4px;top:368px;font-size:11px;">Add</div>
<div class="t " style="left:7px;top:400px;color:#222;"><b style="letter-spacing:-0.3px">=&gt;</b><span class="u">Crs Nbr:</span></div>
<div class="t i" style="left:73.9px;top:399px;color:#7d7d7d;font-size:10.8px;">1010</div>
<div class="t i" style="left:166.7px;top:400px;">ENGLISH 1</div>
<div class="t " style="left:317px;top:400px;">Abbrev Name:</div>
<div class="t i" style="left:398.7px;top:400px;">ENG 1</div>
<div class="t " style="left:791.5px;top:400px;">ENG 1</div>
<div class="t " style="left:860px;top:400px;">Graded Crs:</div>
<div class="t " style="left:7px;top:426px;">Nbr Sem:</div>
<div class="t i" style="left:73.9px;top:425px;color:#999;font-size:10.8px;">2</div>
<div class="t " style="left:314.5px;top:426px;">Textbook ISBN:</div>
<div class="t " style="left:548px;top:418px;">Exclude from</div>
<div class="t " style="left:548px;top:431px;">TeacherPortal:</div>
<div class="t i" style="left:681.8px;top:424px;font-size:10.45px;">Incl Both(Att Grds)</div>
<div class="t " style="left:852.6px;top:424px;">Self Paced:</div>
<div class="t h" style="left:15.7px;top:462px;">Grade Reporting</div>
<div class="t " style="left:15.7px;top:484px;">Per Ctrl:</div>
<div class="t i" style="left:87.2px;top:484px;">2</div>
<div class="t " style="left:15.7px;top:507px;">Department:</div>
<div class="t " style="left:15.7px;top:526px;">Gender Restr:</div>
<div class="t " style="left:15.7px;top:545px;">Required:</div>
<div class="t " style="left:15.7px;top:566px;">Elective:</div>
<div class="t h" style="left:177.5px;top:462px;">Course Codes and Credits</div>
<div class="t " style="left:178px;top:484px;">Tot Credits:</div>
<div class="t i" style="left:241.7px;top:484px;">1.0</div>
<div class="t " style="left:178px;top:504px;">Part Credit:</div>
<div class="t " style="left:178px;top:522px;">AAR:</div>
<div class="t " style="left:178px;top:540px;">Grad Plan:</div>
<div class="t " style="left:178px;top:558px;">Spec Cons:</div>
<div class="t " style="left:178px;top:574px;">OnRamps:</div>
<div class="t " style="left:336.7px;top:484px;">Credit Seq:</div>
<div class="t i" style="left:400.7px;top:484px;">4</div>
<div class="t " style="left:336.7px;top:504px;">Credit Lvl:</div>
<div class="t i" style="left:400.7px;top:504px;">H</div>
<div class="t " style="left:336.7px;top:522px;">CPR:</div>
<div class="t " style="left:336.7px;top:540px;">Speech:</div>
<div class="t h" style="left:484px;top:462px;">Elem/Misc</div>
<div class="t " style="left:484px;top:482px;">Core Crs:</div>
<div class="t " style="left:484px;top:502px;">ELA Wgt:</div>
<div class="t " style="left:484px;top:524px;">Auto Grd:</div>
<div class="t " style="left:484px;top:544px;">Incl UIL Elig:</div>
<div class="t " style="left:484px;top:561px;">Exam/Sem Pat:</div>
<div class="t i" style="left:565px;top:561px;">1</div>
<div class="t h" style="left:649px;top:462px;">PEIMS</div>
<div class="t b" style="left:649px;top:484px;">CTE Hrs:</div>
<div class="t " style="left:649px;top:520px;color:#555;">Instr Sett:</div>
<div class="t b" style="left:649px;top:571px;">Crs Seq:</div>
<div class="t h" style="left:796.7px;top:462px;">HR/GA</div>
<div class="t " style="left:796.7px;top:484px;">HRoll Wgt:</div>
<div class="t i" style="left:871.2px;top:484px;">1</div>
<div class="t " style="left:796.7px;top:504px;">HRoll Table:</div>
<div class="t i" style="left:871.2px;top:504px;color:#333;">R Regular</div>
<div class="t " style="left:796.7px;top:521px;">HRoll Cd:</div>
<div class="t " style="left:796.7px;top:538px;">GA Table:</div>
<div class="t i" style="left:871.2px;top:538px;color:#333;">R Regular</div>
<div class="t " style="left:796.7px;top:558px;">GA Wgt:</div>
<div class="t i" style="left:871.2px;top:558px;">1</div></div>
<svg class="ly" width="1002" height="590" viewBox="0 0 1002 590"><rect x="538.6" y="393.6" width="251.3" height="25.8" rx="12.9" fill="none" stroke="#000" stroke-width="3.2"/>
<rect x="681.23" y="399.73" width="94.55" height="14.35" rx="3.27" fill="#fff" stroke="#404040" stroke-width="1.45"/>
<circle cx="780.5" cy="403.25" r="1.25" fill="#2a7337"/>
<circle cx="780.5" cy="407" r="1.25" fill="#2a7337"/>
<circle cx="780.5" cy="410.75" r="1.25" fill="#2a7337"/>
<rect x="635.2" y="497.6" width="148.2" height="25.8" rx="12.4" fill="none" stroke="#000" stroke-width="3.2"/>
<rect x="635.2" y="532.6" width="148.2" height="37.2" rx="12.4" fill="none" stroke="#000" stroke-width="3.2"/>
<rect x="709.93" y="502.53" width="37.05" height="15.55" rx="3.27" fill="#fff" stroke="#404040" stroke-width="1.45"/>
<rect x="748.6" y="505.3" width="12.5" height="10.1" rx="0.4" fill="#fff" stroke="#93bf9d" stroke-width="1.2"/>
<path d="M750.45 508.05 L759.25 508.05 L754.85 513.05 Z" fill="#1f5c2b"/>
<rect x="709.93" y="535.73" width="37.05" height="14.75" rx="3.27" fill="#fff" stroke="#404040" stroke-width="1.45"/>
<rect x="748.6" y="538.1" width="12.5" height="10" rx="0.4" fill="#fff" stroke="#93bf9d" stroke-width="1.2"/>
<path d="M750.45 540.8 L759.25 540.8 L754.85 545.8 Z" fill="#1f5c2b"/>
<rect x="709.93" y="552.73" width="37.05" height="14.55" rx="3.27" fill="#fff" stroke="#404040" stroke-width="1.45"/>
<rect x="748.6" y="554.6" width="12.5" height="10.3" rx="0.4" fill="#fff" stroke="#93bf9d" stroke-width="1.2"/>
<path d="M750.45 557.45 L759.25 557.45 L754.85 562.45 Z" fill="#1f5c2b"/></svg>
<div class="ly"><div class="t " style="left:548.7px;top:400px;">Service ID:</div>
<div class="t i" style="left:683.5px;top:399px;font-size:10.8px;">03220100</div>
<div class="t b" style="left:649px;top:504px;">Pop Srvd:</div>
<div class="t i" style="left:712.9px;top:504px;">01</div>
<div class="t b" style="left:649px;top:537px;">Class Type:</div>
<div class="t i" style="left:712.9px;top:537px;">01</div>
<div class="t b" style="left:649px;top:554px;">Role ID:</div>
<div class="t i" style="left:712.9px;top:554px;">087</div></div>
<div class="a" style="left:0;top:0;width:1002px;height:590px;border:1px solid #000"></div>
<div class="a" style="left:1px;top:1px;width:1000px;height:588px;border:1px solid #fff"></div>
</body></html>
